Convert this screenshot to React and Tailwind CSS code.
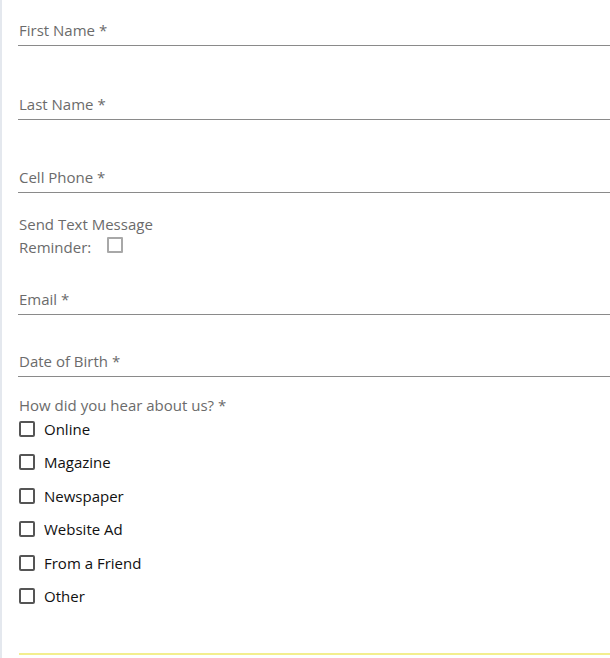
const options = ['Online', 'Magazine', 'Newspaper', 'Website Ad', 'From a Friend', 'Other']

function Field({ label, className }) {
  return (
    <div className={className}>
      <div className="border-b border-[#8a8a8a] pb-[5px] pl-px text-[15px] leading-5 text-[#6b6b6b]">
        {label}
      </div>
    </div>
  )
}

export default function App() {
  return (
    <div className="min-h-screen w-[610px] overflow-hidden bg-white border-l-2 border-[#e4e8ee] pl-4 font-['Open_Sans',sans-serif]">
      <Field label="First Name *" className="pt-5" />
      <Field label="Last Name *" className="mt-12" />
      <Field label="Cell Phone *" className="mt-[47px]" />

      {/* Text reminder */}
      <div className="mt-5 pl-px text-[15px] leading-[23px] text-[#6b6b6b]">
        <div>Send Text Message</div>
        <div className="flex items-center">
          <span>Reminder:</span>
          <span className="ml-[16px] mt-[-6px] inline-block h-4 w-4 border-2 border-[#a8a8a8] rounded-[1px]"></span>
        </div>
      </div>

      <Field label="Email *" className="mt-[30px]" />
      <Field label="Date of Birth *" className="mt-[36px]" />

      {/* How did you hear */}
      <div className="mt-[18px]">
        <div className="pl-px text-[15px] leading-5 text-[#6b6b6b]">How did you hear about us? *</div>
        <div className="mt-[-3px] flex flex-col">
          {options.map((o) => (
            <label key={o} className="flex h-[33.5px] items-center gap-[9px] pl-px">
              <span className="inline-block h-4 w-4 border-2 border-[#555] rounded-[2px]"></span>
              <span className="text-[15px] text-[#111]">{o}</span>
            </label>
          ))}
        </div>
      </div>

      <div className="mt-[40px] ml-px border-b-2 border-[#f3ef8e]"></div>
    </div>
  )
}
